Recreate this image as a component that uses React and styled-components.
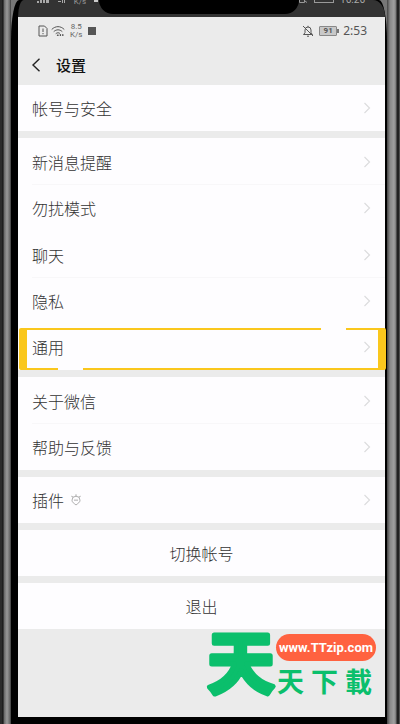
import React, { useState } from "react";
import styled, { createGlobalStyle } from "styled-components";

// 设置列表
const groups = [
  [{ label: "帐号与安全" }],
  [
    { label: "新消息提醒", line: true },
    { label: "勿扰模式" },
    { label: "聊天", line: true },
    { label: "隐私" },
    { label: "通用" },
  ],
  [{ label: "关于微信", line: true }, { label: "帮助与反馈" }],
  [{ label: "插件", badge: true }],
];

const actions = ["切换帐号", "退出"];

// 图标
const SimIcon = () => (
  <svg width="10" height="12" viewBox="0 0 10 12" fill="none" stroke="#555">
    <path d="M1 1h5.5L9 3.5V11H1z" />
    <path d="M5 3.5v3.5M5 8v1.2" />
  </svg>
);

const WifiIcon = () => (
  <svg width="14" height="12" viewBox="0 0 14 12" fill="none" stroke="#555" strokeLinecap="round">
    <path d="M1 4.2C4.5.7 9.5.7 13 4.2M3 6.4c2.4-2.2 5.6-2.2 8 0M5 8.5c1.2-1 2.6-1 3.6-.3" />
    <path d="M6.5 10.2h.6M9.4 9.6v.8M11.8 9.6v.8" strokeWidth="1.4" />
  </svg>
);

const MuteIcon = () => (
  <svg width="12" height="12" viewBox="0 0 12 12" fill="none" stroke="#555">
    <path d="M1.5 9.5h9L9 7.8V5a3 3 0 0 0-6 0v2.8zM6 .8V2M5 11.2h2M1 1l10 10" />
  </svg>
);

const BackIcon = () => (
  <svg width="10" height="14" viewBox="0 0 10 14" fill="none" stroke="#222" strokeWidth="1.4">
    <path d="M8.5.8 2 7l6.5 6.2" />
  </svg>
);

const ArrowIcon = () => (
  <svg width="8" height="12" viewBox="0 0 8 12" fill="none" stroke="#dcdcde" strokeWidth="1.2">
    <path d="M1.5 1l5 5-5 5" />
  </svg>
);

const PluginIcon = () => (
  <svg width="10" height="12" viewBox="0 0 10 12" fill="none" stroke="#999" strokeWidth=".8">
    <path d="M.3 2.2 2 3M9.7 2.2 8 3M5 .3v2" />
    <path d="M5 2.2a4 4 0 0 1 4 4C9 8.5 7 9.2 5 11 3 9.2 1 8.5 1 6.2a4 4 0 0 1 4-4z" />
    <path d="M3 6.6l1-.9 1 .9 1-.9 1 .9" />
  </svg>
);

const SignalIcon = () => (
  <svg width="13" height="4" viewBox="0 0 13 4" fill="#aaa">
    <path d="M0 1h2v2H0zM3 0h2v3H3zM6 0h2v3H6zM9 0h3v3H9z" />
  </svg>
);

const DotsIcon = () => (
  <svg width="8" height="4" viewBox="0 0 8 4" fill="#aaa">
    <path d="M0 1h3v1H0zM4 0h1v3H4zM6 0h1v3H6z" />
  </svg>
);

const CameraIcon = () => (
  <svg width="9" height="4" viewBox="0 0 9 4" fill="none" stroke="#999">
    <path d="M.5 0v2.5h5V0M6 1l2 1.5" />
  </svg>
);

const App = () => {
  const [current, setCurrent] = useState("通用");

  return (
    <React.Fragment>
      <GlobalStyle />
      <Phone>
        <Bezel>
          <TopStrip>
            <StripLeft>
              <SignalIcon />
              <DotsIcon />
              <StripSpeed>K/s</StripSpeed>
              <StripDot />
            </StripLeft>
            <Notch />
            <StripRight>
              <CameraIcon />
              <StripBattery />
              <StripTime>16:26</StripTime>
            </StripRight>
          </TopStrip>
          <Screen>
            <StatusBar>
              <StatusSide>
                <SimIcon />
                <WifiIcon />
                <Speed>
                  <span>8.5</span>
                  <span>K/s</span>
                </Speed>
                <Square />
              </StatusSide>
              <StatusSide>
                <MuteIcon />
                <Battery>91</Battery>
                <Time>2:53</Time>
              </StatusSide>
            </StatusBar>
            <Header>
              <BackButton aria-label="返回">
                <BackIcon />
              </BackButton>
              <Title>设置</Title>
            </Header>
            <List>
              {groups.map((group, idx) => (
                <Group key={idx}>
                  {group.map((g) => (
                    <Row key={g.label} $line={g.line} onClick={() => setCurrent(g.label)}>
                      <RowLabel>{g.label}</RowLabel>
                      {g.badge ? <PluginIcon /> : null}
                      <RowArrow>
                        <ArrowIcon />
                      </RowArrow>
                      {current === g.label ? <Marker /> : null}
                    </Row>
                  ))}
                </Group>
              ))}
              {actions.map((a) => (
                <Group key={a}>
                  <ActionRow>{a}</ActionRow>
                </Group>
              ))}
            </List>
            <Footer>
              <BigMark width="70" height="72" viewBox="0 0 70 72">
                <text x="35" y="59" textAnchor="middle">
                  天
                </text>
              </BigMark>
              <MarkSide>
                <SiteLink href="#">www.TTzip.com</SiteLink>
                <SmallMark>
                  <span>天</span>
                  <span>下</span>
                  <span>載</span>
                </SmallMark>
              </MarkSide>
            </Footer>
          </Screen>
        </Bezel>
      </Phone>
    </React.Fragment>
  );
};

const GlobalStyle = createGlobalStyle`
  * {
    box-sizing: border-box;
  }
  body {
    margin: 0;
    background: #222;
    font-family: "Noto Sans CJK SC", sans-serif;
  }
  button {
    border: none;
    padding: 0;
    font-family: inherit;
    cursor: pointer;
  }
  svg {
    display: block;
    flex-shrink: 0;
  }
`;

const Phone = styled.div`
  display: flex;
  min-height: 100vh;
  padding: 0 13px 0 11px;
  background:
    linear-gradient(90deg, #2b2b2b 0 2px, #111 3px, #666 4px, #999 7px, #666 10px, #333 11px) left / 11px 100% no-repeat,
    linear-gradient(90deg, #444, #888 3px, #a0a0a0 7px, #777 9px, #222 10px 12px, #777 13px) right / 13px 100% no-repeat,
    #777;
`;

const Bezel = styled.div`
  flex: 1;
  display: flex;
  flex-direction: column;
  padding: 0 2px 7px 7px;
  background: #000;
  border-top-left-radius: 8px 40px;
  border-top-right-radius: 8px 40px;
`;

const TopStrip = styled.div`
  height: 17px;
  display: grid;
  grid-template-columns: 1fr 200px 1fr;
  overflow: hidden;
  background: #333;
  border-top-left-radius: 6px 17px;
  border-top-right-radius: 12px 17px;
`;

const Notch = styled.div`
  height: 14px;
  background: #000;
  border-radius: 0 0 16px 16px;
`;

const StripLeft = styled.div`
  display: flex;
  align-items: flex-start;
  justify-content: flex-end;
  gap: 8px;
  padding-right: 1px;
`;

const StripRight = styled(StripLeft)`
  gap: 6px;
  padding-right: 20px;
`;

const StripSpeed = styled.span`
  margin-top: -2px;
  font: 8px/8px Roboto, sans-serif;
  color: #999;
`;

const StripDot = styled.span`
  width: 4px;
  height: 2px;
  background: #ccc;
`;

const StripBattery = styled.span`
  width: 20px;
  height: 3px;
  border: 1px solid #999;
  border-top: none;
`;

const StripTime = styled.span`
  margin-top: -5px;
  font: 10px/10px Roboto, sans-serif;
  color: #aaa;
`;

const Screen = styled.div`
  flex: 1;
  display: flex;
  flex-direction: column;
  background: #ebebeb;
`;

const StatusBar = styled.div`
  height: 28px;
  display: flex;
  justify-content: space-between;
  align-items: center;
  padding: 0 18px 0 20px;
`;

const StatusSide = styled.div`
  display: flex;
  align-items: center;
  gap: 3px;
`;

const Speed = styled.div`
  display: flex;
  flex-direction: column;
  align-items: center;
  margin: 0 3px 0 2px;
  font: 8px/8px Roboto, sans-serif;
  color: #666;
`;

const Square = styled.span`
  width: 8px;
  height: 8px;
  background: #555;
`;

const Battery = styled.div`
  position: relative;
  width: 18px;
  height: 10px;
  margin: 0 3px 0 2px;
  border: 1px solid #888;
  border-radius: 1px;
  background: #c8c8c8;
  font: bold 8px/8px Roboto, sans-serif;
  text-align: center;
  color: #555;
  &::after {
    content: "";
    position: absolute;
    top: 2px;
    right: -3px;
    width: 2px;
    height: 4px;
    background: #777;
  }
`;

const Time = styled.div`
  font: 12px/16px "Noto Sans", sans-serif;
  color: #555;
`;

const Header = styled.div`
  height: 40px;
  display: flex;
  align-items: center;
  padding-left: 13px;
`;

const BackButton = styled.button`
  display: flex;
  margin-right: 15px;
  background: transparent;
`;

const Title = styled.h1`
  margin: 0;
  font-size: 15px;
  line-height: 20px;
  font-weight: 500;
  color: #111;
`;

const List = styled.div`
  display: flex;
  flex-direction: column;
  gap: 7px;
`;

const Group = styled.div`
  display: flex;
  flex-direction: column;
  background: #fefdff;
`;

const Row = styled.button`
  position: relative;
  display: flex;
  align-items: center;
  height: ${(props) => (props.$line ? "47px" : "46px")};
  padding: 0 14px;
  background: transparent;
  color: #333;
  &::after {
    content: "";
    display: ${(props) => (props.$line ? "block" : "none")};
    position: absolute;
    left: 14px;
    right: 0;
    bottom: 0;
    height: 1px;
    background: #f8f7f9;
  }
`;

const RowLabel = styled.span`
  margin-right: 7px;
  font-size: 16px;
  line-height: 24px;
  font-weight: 300;
`;

const RowArrow = styled.span`
  margin-left: auto;
`;

// 当前项的黄色框
const Marker = styled.span`
  position: absolute;
  top: 4px;
  right: -1px;
  bottom: 0;
  left: 1px;
  border: solid #fac71d;
  border-width: 2px 8px;
  border-radius: 2px;
  &::before,
  &::after {
    content: "";
    position: absolute;
    width: 25px;
    height: 4px;
    background: #fefdff;
  }
  &::before {
    top: -4px;
    right: 32px;
  }
  &::after {
    bottom: -2px;
    left: 31px;
  }
`;

const ActionRow = styled.button`
  height: 46px;
  background: transparent;
  font-size: 16px;
  line-height: 24px;
  font-weight: 300;
  color: #333;
`;

const Footer = styled.div`
  flex: 1;
  display: flex;
  justify-content: flex-end;
  align-items: flex-start;
  padding-right: 9px;
  color: #0bbf6c;
`;

const BigMark = styled.svg`
  fill: currentColor;
  stroke: currentColor;
  stroke-width: 5px;
  stroke-linejoin: round;
  font-size: 67px;
  font-weight: 700;
`;

const MarkSide = styled.div`
  display: flex;
  flex-direction: column;
  padding-top: 5px;
`;

const SiteLink = styled.a`
  width: 100px;
  height: 27px;
  border-radius: 14px;
  background: #ff6240;
  font: bold 13px/27px Roboto, sans-serif;
  text-align: center;
  text-decoration: none;
  color: #fff;
`;

const SmallMark = styled.div`
  display: flex;
  justify-content: space-between;
  margin-top: 6px;
  padding: 0 4px 0 1px;
  font-size: 27px;
  line-height: 28px;
  font-weight: 700;
`;

export default App;
